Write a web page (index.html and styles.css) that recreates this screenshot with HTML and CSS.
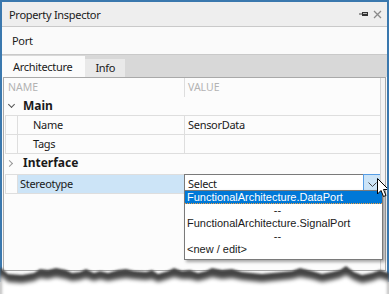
FILE: index.html
```html
<!DOCTYPE html>
<html lang="en">
	<head>
		<meta charset="UTF-8" />
		<title>Property Inspector</title>
		<link rel="stylesheet" href="styles.css">
	</head>
	<body>
		<div class="window">
			<div class="titlebar">
				<span class="title">Property Inspector</span>
				<span class="tools">
					<svg class="pin" width="10" height="6" viewBox="0 0 10 6"><rect x="0" y="2.5" width="3" height="1" fill="#444"/><rect x="3" y="1" width="6" height="4" fill="#333"/><rect x="4" y="2" width="4" height="1" fill="#bbb"/></svg>
					<svg class="close" width="9" height="9" viewBox="0 0 9 9"><path d="M1 1 L8 8 M8 1 L1 8" stroke="#8a8a8a" stroke-width="1.3"/></svg>
				</span>
			</div>
			<div class="port">Port</div>
			<div class="tabs">
				<div class="tab active">Architecture</div>
				<div class="tab">Info</div>
			</div>
			<div class="frame">
				<div class="grid">
					<div class="row head">
						<div class="name">NAME</div>
						<div class="value">VALUE</div>
					</div>
					<div class="row group">
						<span class="chev down"></span>Main
					</div>
					<div class="row prop">
						<div class="name sub">Name</div>
						<div class="value">SensorData</div>
					</div>
					<div class="row prop">
						<div class="name sub">Tags</div>
						<div class="value"></div>
					</div>
					<div class="row group">
						<span class="chev right"></span>Interface
					</div>
					<div class="row prop current">
						<div class="name">Stereotype</div>
						<div class="value combo">
							<span>Select</span>
							<span class="drop"><svg width="9" height="5" viewBox="0 0 9 5"><path d="M0.5 0.5 L4.5 4.5 L8.5 0.5" fill="none" stroke="#444"/></svg></span>
						</div>
					</div>
				</div>
				<div class="scroll"></div>
			</div>
			<ul class="list">
				<li class="sel">FunctionalArchitecture.DataPort</li>
				<li class="sep">--</li>
				<li>FunctionalArchitecture.SignalPort</li>
				<li class="sep">--</li>
				<li>&lt;new / edit&gt;</li>
			</ul>
			<svg class="cursor" width="13" height="20" viewBox="0 0 13 20"><path d="M0.5 0.5 L0.5 16 L4 12.5 L6.5 18.5 L9 17.5 L6.5 11.5 L11.5 11.5 Z" fill="#fff" stroke="#000"/></svg>
		</div>
		<svg class="tear" width="389" height="40" viewBox="0 0 389 40">
			<defs>
				<filter id="soft"><feGaussianBlur stdDeviation="0.9"/></filter>
				<filter id="softer"><feGaussianBlur stdDeviation="2"/></filter>
			</defs>
			<path filter="url(#soft)" fill="#454545" d="M0 6 L8 13 L22 14 L34 12 L40 8 L48 9 L56 7 L66 9 L72 12 L80 11 L86 8 L94 12 L100 10 L108 12 L118 9 L126 8 L134 10 L146 11 L152 9 L158 13 L168 10 L174 7 L182 10 L190 9 L198 12 L206 10 L212 7 L222 9 L232 8 L242 11 L252 12 L262 13 L272 12 L282 11 L292 10 L300 7 L312 10 L322 13 L332 11 L340 9 L346 5 L354 11 L362 14 L372 12 L380 9 L389 12 L389 40 L0 40 Z"/>
			<path filter="url(#softer)" fill="#fff" d="M0 14 L8 21 L22 22 L34 20 L40 17 L48 18 L56 16 L66 18 L72 20 L80 19 L86 17 L94 20 L100 18 L108 20 L118 18 L126 17 L134 18 L146 19 L152 18 L158 21 L168 18 L174 16 L182 18 L190 18 L198 20 L206 18 L212 16 L222 18 L232 17 L242 19 L252 20 L262 21 L272 20 L282 19 L292 18 L300 16 L312 18 L322 21 L332 19 L340 17 L346 14 L354 19 L362 22 L372 20 L380 17 L389 20 L389 40 L0 40 Z"/>
		</svg>
	</body>
</html>
```

FILE: styles.css
```css
html, body { margin: 0; padding: 0; background: white; color: #1a1a1a; font-family: "Noto Sans", sans-serif; font-size: 11px; letter-spacing: -0.3px; }
.window { position: relative; height: 282px; box-sizing: border-box; border: solid #3a78ae; border-width: 2px 2px 0 2px; background: #f8f8f8; overflow: hidden; }
.titlebar { display: flex; align-items: center; justify-content: space-between; height: 24px; padding: 0 5px 0 7px; background: #eeeeee; }
.tools { display: flex; align-items: center; gap: 4px; }
.port { height: 27px; line-height: 27px; padding-left: 10px; background: #fafafa; border-top: 1px solid #c9c9c9; border-bottom: 1px solid #c9c9c9; }
.tabs { display: flex; align-items: flex-end; height: 22px; background: #d8d8d8; }
.tab { height: 18px; line-height: 18px; padding: 0 10px; background: #e9e9e9; }
.tab.active { height: 21px; line-height: 21px; padding: 0 13px 0 11px; background: #fbfbfb; }
.frame { display: flex; margin: 0 1px 0 1px; border: 1px solid #a9a9a9; background: #fcfcfc; height: 192px; }
.grid { flex: 1; }
.scroll { width: 4px; border-left: 1px solid #d4d4d4; background: #f4f4f4; }
.row { display: flex; height: 18px; line-height: 18px; }
.row .name { box-sizing: border-box; }
.row .value { flex: 1; padding-left: 3px; }
.row.head { height: 19px; line-height: 19px; color: #b3b3b3; font-size: 10.5px; letter-spacing: 0; }
.row.head .name { width: 181px; padding-left: 4px; border-right: 1px solid #dedede; }
.row.group { font-weight: bold; font-size: 12px; letter-spacing: 0; align-items: center; }
.row.prop { margin-left: 1px; border-left: 1px solid #dedede; border-bottom: 1px solid #dedede; }
.row.prop .name { width: 168px; margin-left: 11px; padding-left: 2px; border-left: 1px solid #dedede; border-right: 1px solid #dedede; }
.row.prop .name.sub { padding-left: 15px; }
.row.group + .row.prop { border-top: 1px solid #dedede; }
.row.current { margin-top: 2px; }
.row.current .name { background: #cce4f7; }
.chev { display: inline-block; width: 4px; height: 4px; margin: 0 9px 0 5px; border: solid #555; border-width: 0 1.5px 1.5px 0; }
.chev.down { transform: translateY(-2px) rotate(45deg); }
.chev.right { transform: rotate(-45deg); border-color: #999; margin-left: 3px; margin-right: 11px; }
.combo { display: flex; justify-content: space-between; background: #fff; border: 1px solid #7a7a7a; margin: -1px -1px -1px -1px; padding-left: 3px; }
.drop { display: flex; align-items: center; justify-content: center; width: 16px; background: #cce4f7; border: 1px solid #569de5; margin: -1px -1px -1px 0; }
.list { position: absolute; left: 182px; top: 188px; width: 197px; margin: 0; padding: 0 0 3px 0; list-style: none; background: #fff; border: 1px solid #7a7a7a; box-shadow: 2px 2px 3px rgba(0, 0, 0, 0.35); font-family: "Liberation Sans", sans-serif; font-size: 11px; letter-spacing: 0; }
.list li { height: 13px; line-height: 13px; padding-left: 2px; }
.list li.sel { background: #0078d7; color: #fff; border-bottom: 1px dotted #f0a040; height: 12px; }
.list li.sep { text-align: center; padding-right: 14px; }
.cursor { position: absolute; left: 375px; top: 176px; }
.tear { position: absolute; left: 0; top: 261px; }
```
